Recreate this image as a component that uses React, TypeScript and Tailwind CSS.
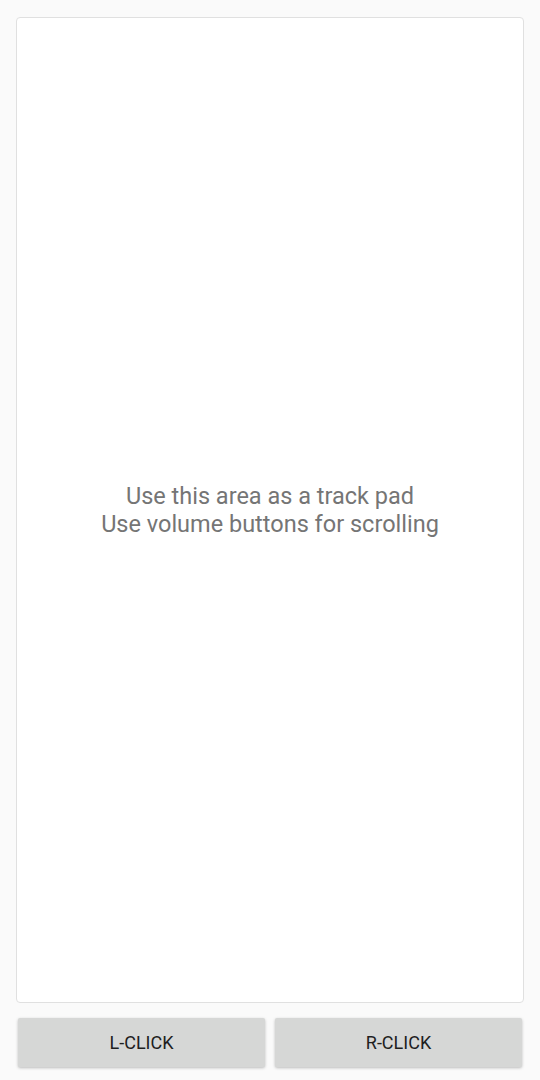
import React from "react";

export default function App() {
	return (
		<div className="flex h-[1080px] w-full flex-col bg-[#fafafa] font-['Roboto',sans-serif]">
			{/* Track pad area */}
			<div className="mx-4 mt-[17px] flex flex-1 items-center justify-center rounded-[4px] border border-[#e0e0e0] bg-white">
				<p className="text-center text-[23.5px] leading-[28px] text-[#757575]">
					Use this area as a track pad
					<br />
					Use volume buttons for scrolling
				</p>
			</div>

			{/* Click buttons */}
			<div className="mt-[15px] mb-[13px] flex h-[49px] gap-[10px] px-[18px]">
				<button
					type="button"
					className="flex-1 rounded-[2px] bg-[#d6d7d6] text-[18px] font-normal text-[#1f1f1f] shadow-[0_1px_3px_rgba(0,0,0,0.25)]"
				>
					L-CLICK
				</button>
				<button
					type="button"
					className="flex-1 rounded-[2px] bg-[#d6d7d6] text-[18px] font-normal text-[#1f1f1f] shadow-[0_1px_3px_rgba(0,0,0,0.25)]"
				>
					R-CLICK
				</button>
			</div>
		</div>
	);
}
